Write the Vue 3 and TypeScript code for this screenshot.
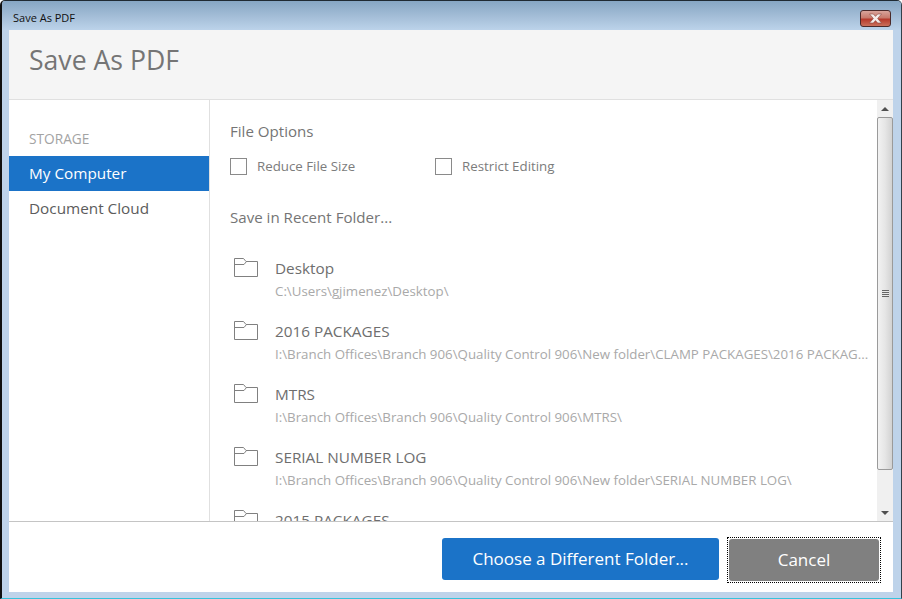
<script setup lang="ts">
interface Folder { name: string; path?: string }
const folders: Folder[] = [
  { name: 'Desktop', path: 'C:\\Users\\gjimenez\\Desktop\\' },
  { name: '2016 PACKAGES', path: 'I:\\Branch Offices\\Branch 906\\Quality Control 906\\New folder\\CLAMP PACKAGES\\2016 PACKAG...' },
  { name: 'MTRS', path: 'I:\\Branch Offices\\Branch 906\\Quality Control 906\\MTRS\\' },
  { name: 'SERIAL NUMBER LOG', path: 'I:\\Branch Offices\\Branch 906\\Quality Control 906\\New folder\\SERIAL NUMBER LOG\\' },
  { name: '2015 PACKAGES' },
]
</script>

<template>
  <div class="window">
    <div class="titlebar">
      <span class="title-text">Save As PDF</span>
      <button class="close" aria-label="Close">
        <svg width="17" height="11" viewBox="0 0 17 11">
          <path d="M2.5 1h3.8L8.5 3.4 10.7 1h3.8L10.6 5.5l3.9 4.5h-3.8L8.5 7.6 6.3 10H2.5l3.9-4.5z" fill="#f4ecea" stroke="#8a4a42" stroke-width=".6" />
        </svg>
      </button>
    </div>
    <div class="client">
      <header class="header"><h1>Save As PDF</h1></header>
      <div class="body">
        <nav class="sidebar">
          <div class="storage">STORAGE</div>
          <div class="nav-item active">My Computer</div>
          <div class="nav-item">Document Cloud</div>
        </nav>
        <main class="main">
          <div class="section-title options-title">File Options</div>
          <div class="options">
            <label class="option first"><span class="check"></span>Reduce File Size</label>
            <label class="option"><span class="check"></span>Restrict Editing</label>
          </div>
          <div class="section-title recent-title">Save in Recent Folder...</div>
          <div class="folder" v-for="f in folders" :key="f.name">
            <svg class="folder-icon" width="26" height="20" viewBox="0 0 26 20" fill="none" stroke="#808080">
              <path d="M1.5 18.5V.5H10.5L13 3.5H24.5V18.5Z" />
              <path d="M1.5 6.5H11L13.5 3.5" />
            </svg>
            <div class="folder-text">
              <div class="folder-name">{{ f.name }}</div>
              <div v-if="f.path" class="folder-path">{{ f.path }}</div>
            </div>
          </div>
        </main>
        <div class="scrollbar">
          <div class="arrow-btn"><span class="tri up"></span></div>
          <div class="thumb">
            <span class="grip"></span>
          </div>
          <div class="track"></div>
          <div class="arrow-btn"><span class="tri down"></span></div>
        </div>
      </div>
      <footer class="footer">
        <button class="btn primary">Choose a Different Folder...</button>
        <span class="focus-ring"><button class="btn cancel">Cancel</button></span>
      </footer>
    </div>
  </div>
</template>

<style>
html, body { margin: 0; background: #fff; overflow: hidden; }
</style>

<style scoped>
.window {
  width: 902px;
  height: 599px;
  box-sizing: border-box;
  display: flex;
  flex-direction: column;
  border-top: 1px solid #1f2a33;
  border-left: 2px solid #111;
  border-right: 1px solid #33404a;
  border-bottom: 1px solid #35c3dc;
  background: #bed3ea;
  border-top-left-radius: 5px;
  border-top-right-radius: 5px;
  font-family: "Open Sans", "Noto Sans", sans-serif;
  overflow: hidden;
}
.titlebar {
  height: 29px;
  flex: none;
  display: flex;
  align-items: center;
  justify-content: space-between;
  padding: 0 10px 0 11px;
  background: linear-gradient(180deg, #86a6c4 0%, #a2bcd6 50%, #bcd3ea 100%);
}
.title-text {
  font-size: 11px;
  color: #101010;
  transform: translateY(2px);
}
.close {
  width: 31px;
  height: 17px;
  padding: 0;
  border: 1px solid #4a2a2a;
  border-radius: 3px;
  background: linear-gradient(180deg, #d8a49b 0%, #c77a6c 45%, #b63a2c 55%, #c9705c 100%);
  display: flex;
  align-items: center;
  justify-content: center;
  transform: translateY(3px);
}
.client {
  flex: 1;
  min-height: 0;
  margin: 0 8px 6px 7px;
  background: #fff;
  display: flex;
  flex-direction: column;
}
.header {
  height: 70px;
  flex: none;
  box-sizing: border-box;
  background: #f5f5f5;
  border-bottom: 1px solid #e0e0e0;
  padding: 12px 0 0 20px;
}
.header h1 {
  margin: 0;
  font-size: 26.6px;
  line-height: 36px;
  font-weight: 400;
  color: #757575;
}
.body {
  height: 421px;
  flex: none;
  display: flex;
  overflow: hidden;
}
.sidebar {
  width: 201px;
  flex: none;
  box-sizing: border-box;
  border-right: 1px solid #e0e0e0;
  padding-top: 29px;
}
.storage {
  font-size: 13.7px;
  line-height: 20px;
  font-weight: 400;
  color: #a3a3a3;
  padding-left: 20px;
  height: 27px;
}
.nav-item {
  height: 35px;
  line-height: 35px;
  padding-left: 20px;
  font-size: 15.3px;
  color: #5c5c5c;
}
.nav-item.active {
  background: #1b73c8;
  color: #fff;
}
.main {
  flex: 1;
  min-width: 0;
  padding: 21px 0 0 20px;
  overflow: hidden;
  white-space: nowrap;
}
.section-title {
  font-size: 15.1px;
  line-height: 20px;
  color: #757575;
}
.options {
  display: flex;
  margin-top: 15px;
  height: 20px;
}
.option {
  display: flex;
  align-items: center;
  font-size: 13.3px;
  color: #7c7c7c;
}
.option.first { width: 205px; }
.check {
  width: 15px;
  height: 15px;
  border: 1px solid #8a8a8a;
  margin-right: 10px;
}
.recent-title { margin-top: 31px; margin-bottom: 32px; }
.folder {
  display: flex;
  height: 63px;
  padding-left: 3px;
}
.folder-icon { flex: none; margin-top: -1px; margin-right: 16px; }
.folder-text { min-width: 0; margin-top: -1px; }
.folder-name {
  font-size: 15.3px;
  line-height: 20px;
  color: #6e6e6e;
}
.folder-path {
  font-size: 13.3px;
  line-height: 20px;
  margin-top: 3px;
  color: #a9a9a9;
}
.scrollbar {
  width: 16px;
  flex: none;
  display: flex;
  flex-direction: column;
  background: #f0f0f0;
}
.arrow-btn {
  height: 17px;
  flex: none;
  display: flex;
  align-items: center;
  justify-content: center;
}
.tri { width: 0; height: 0; border-left: 4px solid transparent; border-right: 4px solid transparent; }
.tri.up { border-bottom: 4px solid #505050; }
.tri.down { border-top: 4px solid #505050; }
.thumb {
  height: 353px;
  flex: none;
  box-sizing: border-box;
  border: 1px solid #9a9a9a;
  border-radius: 2px;
  background: linear-gradient(90deg, #f2f2f2, #e6e6e6 50%, #d2d2d2);
  display: flex;
  align-items: center;
  justify-content: center;
}
.grip {
  width: 7px;
  height: 7px;
  background: repeating-linear-gradient(180deg, #666 0 1px, #e8e8e8 1px 2px);
}
.track { flex: 1; }
.footer {
  flex: 1;
  border-top: 1px solid #c4c4c4;
  display: flex;
  align-items: flex-start;
  justify-content: flex-end;
  padding: 16px 13px 0 0;
  gap: 9px;
}
.btn {
  height: 42px;
  border: 0;
  border-radius: 3px;
  color: #fff;
  font-family: inherit;
  font-size: 17px;
  padding: 0 0 2px;
}
.primary { width: 277px; background: #1b73c8; }
.cancel { width: 150px; background: #808080; display: block; }
.focus-ring {
  display: block;
  margin: -1px;
  border: 1px dotted #000;
  padding: 1px;
}
</style>
